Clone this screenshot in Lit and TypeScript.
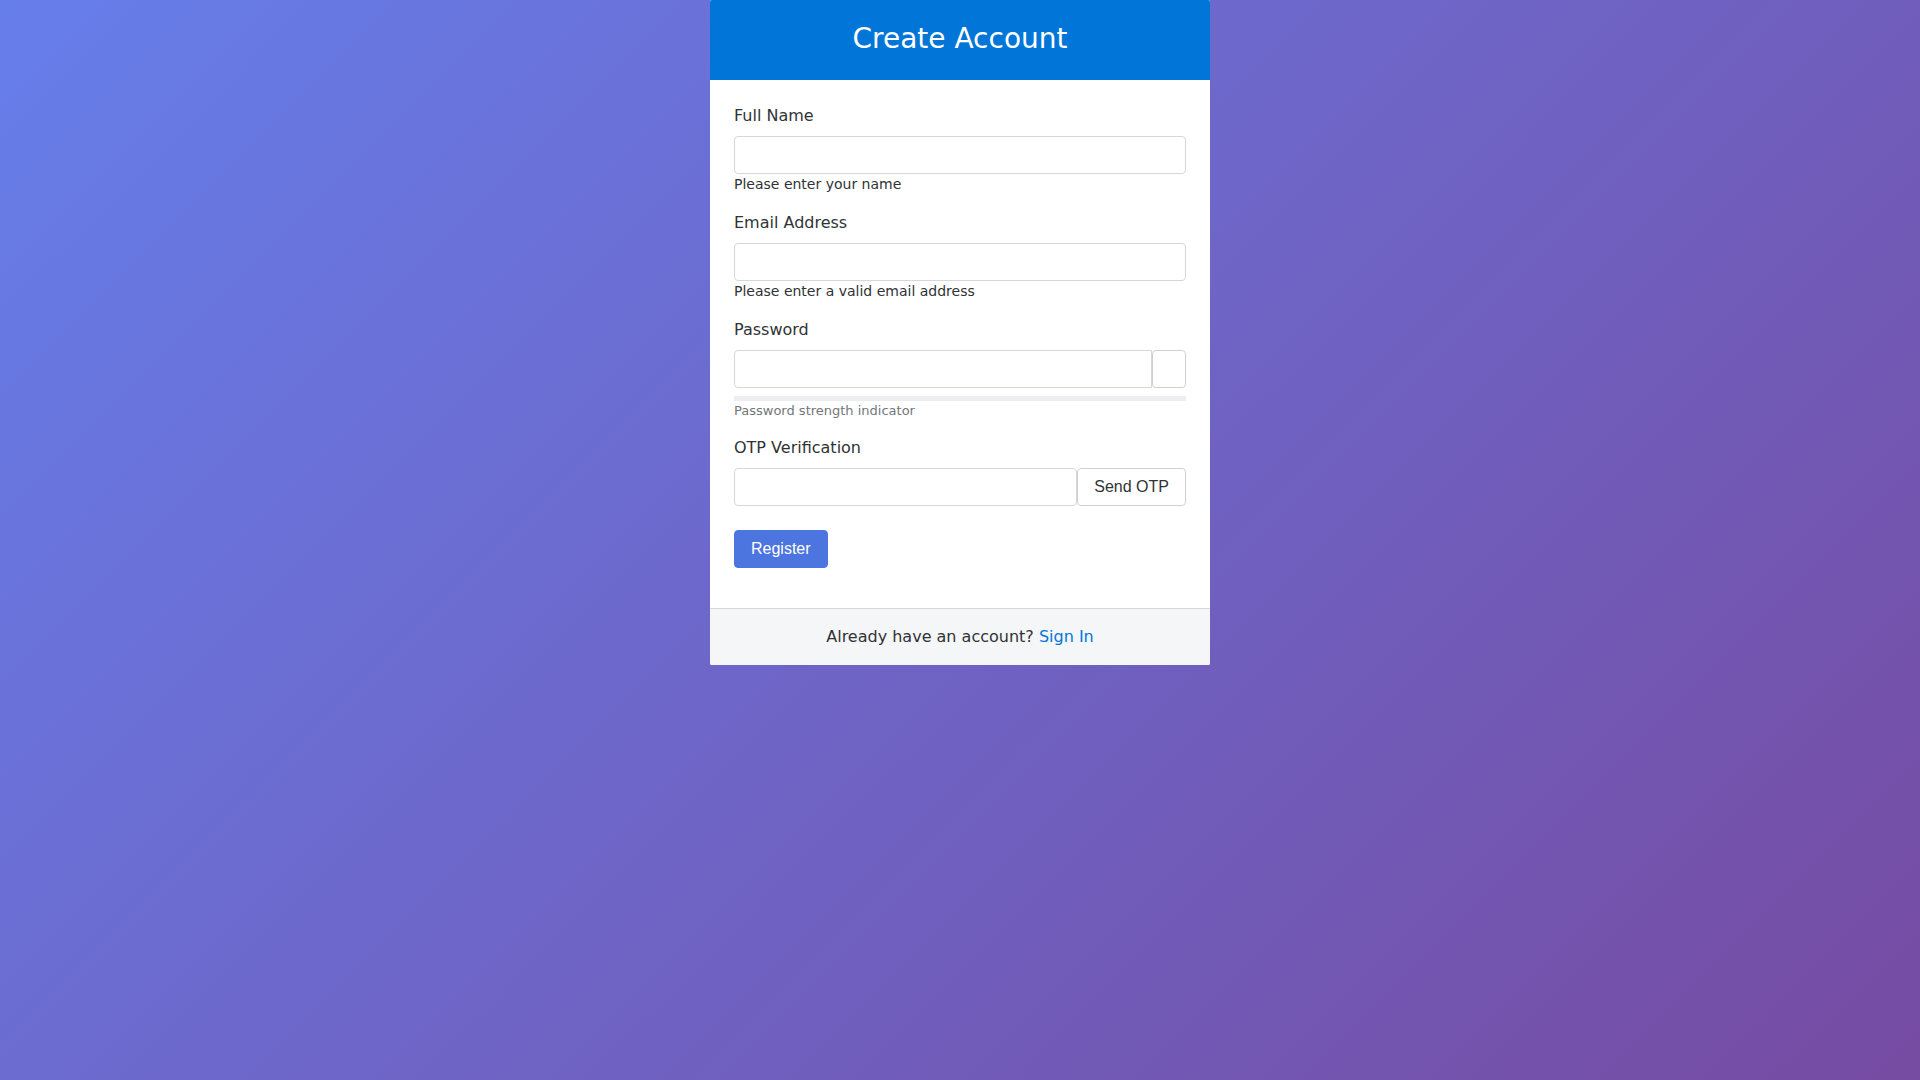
import { LitElement, html, css } from "lit";
import { customElement, state } from "lit/decorators.js";

@customElement("app-root")
export class AppRoot extends LitElement {
  static styles = css`
    :host {
      display: block;
      --border: #d6d7d9;
      --text: #303335;
      --brand: #0275d8;
    }
    *,
    *::before,
    *::after {
      box-sizing: border-box;
    }
    .page {
      min-height: 100vh;
      background: linear-gradient(135deg, #667eea 0%, #764ba2 100%);
      color: var(--text);
      font: 16px/24px "DejaVu Sans", sans-serif;
    }
    .card {
      max-width: 500px;
      margin: 0 auto;
      background: #fff;
      border-radius: 2px;
      overflow: hidden;
    }
    .header {
      padding: 22px 24px 24px;
      background: var(--brand);
      color: #fff;
      text-align: center;
    }
    .title {
      margin: 0;
      font-size: 28px;
      line-height: 34px;
      font-weight: 400;
    }
    .form {
      display: flex;
      flex-direction: column;
      gap: 16px;
      padding: 24px 24px 40px;
    }
    .label {
      display: block;
      margin-bottom: 8px;
    }
    .row {
      display: flex;
    }
    .control {
      display: block;
      width: 100%;
      min-width: 0;
      height: 38px;
      padding: 6px 12px;
      border: 1px solid var(--border);
      border-radius: 4px;
      background: #fff;
      color: inherit;
      font: inherit;
    }
    .row .control {
      flex: 1;
    }
    .control.joined {
      border-top-right-radius: 0;
      border-bottom-right-radius: 0;
    }
    .hint {
      font-size: 14px;
      line-height: 21px;
    }
    .meter {
      height: 5px;
      margin-top: 8px;
      background: #eceeef;
    }
    .caption {
      color: #73777b;
      font-size: 13px;
      line-height: 19px;
    }
    .button {
      flex: none;
      height: 38px;
      padding: 6px 16px;
      border: 1px solid #cfd0d2;
      border-radius: 4px;
      background: #fff;
      color: inherit;
      font: 16px/24px "Liberation Sans", Arial, sans-serif;
      cursor: pointer;
    }
    .submit {
      align-self: flex-start;
      margin-top: 8px;
      border-color: #4c75df;
      background: #4c75df;
      color: #fff;
    }
    .footer {
      padding: 16px 24px;
      border-top: 1px solid var(--border);
      background: #f5f6f8;
      text-align: center;
    }
    .link {
      color: var(--brand);
      text-decoration: none;
    }
  `;

  @state() private reveal = false;

  render() {
    return html`
      <main class="page">
        <section class="card">
          <header class="header"><h1 class="title">Create Account</h1></header>
          <form class="form" novalidate @submit=${(e: Event) => e.preventDefault()}>
            <div>
              <label class="label" for="name">Full Name</label>
              <input class="control" id="name" type="text" aria-describedby="name-hint" />
              <div class="hint" id="name-hint">Please enter your name</div>
            </div>
            <div>
              <label class="label" for="email">Email Address</label>
              <input class="control" id="email" type="email" aria-describedby="email-hint" />
              <div class="hint" id="email-hint">Please enter a valid email address</div>
            </div>
            <div>
              <label class="label" for="password">Password</label>
              <div class="row">
                <input
                  class="control joined"
                  id="password"
                  type=${this.reveal ? "text" : "password"}
                  aria-describedby="strength"
                />
                <button
                  class="button"
                  type="button"
                  aria-label="Show password"
                  aria-pressed=${this.reveal ? "true" : "false"}
                  @click=${() => (this.reveal = !this.reveal)}
                ></button>
              </div>
              <div class="meter"></div>
              <div class="caption" id="strength">Password strength indicator</div>
            </div>
            <div>
              <label class="label" for="otp">OTP Verification</label>
              <div class="row">
                <input class="control" id="otp" type="text" inputmode="numeric" />
                <button class="button" type="button">Send OTP</button>
              </div>
            </div>
            <button class="button submit" type="submit">Register</button>
          </form>
          <footer class="footer">
            Already have an account? <a class="link" href="#">Sign In</a>
          </footer>
        </section>
      </main>
    `;
  }
}
